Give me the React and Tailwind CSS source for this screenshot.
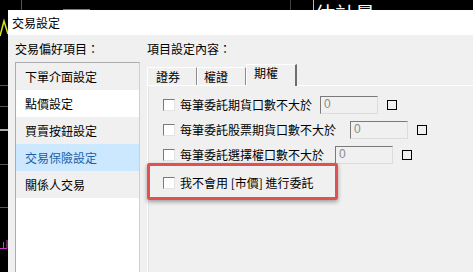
import React from "react";

const font = { fontFamily: '"Noto Sans CJK TC", "Noto Sans", sans-serif' };

const menuItems = [
  { label: "下單介面設定", bg: "bg-[#f0f0f0]" },
  { label: "點價設定", bg: "bg-white" },
  { label: "買賣按鈕設定", bg: "bg-[#f0f0f0]" },
  { label: "交易保險設定", bg: "bg-[#cce8ff]", active: true },
  { label: "關係人交易", bg: "bg-[#f0f0f0]" },
];

const limitRows = [
  { label: "每筆委託期貨口數不大於", width: "w-[140px]" },
  { label: "每筆委託股票期貨口數不大於", width: "w-[170px]" },
  { label: "每筆委託選擇權口數不大於", width: "w-[155px]" },
];

const Checkbox = () => (
  <span className="w-[12px] h-[12px] shrink-0 bg-white border border-t-[#7a7a7a] border-l-[#7a7a7a] border-r-[#e3e3e3] border-b-[#e3e3e3]" />
);

const TopStrip = () => (
  <svg width="473" height="10" className="block shrink-0">
    <rect width="473" height="10" fill="#000" />
    <line x1="21.5" y1="0" x2="21.5" y2="10" stroke="#555" />
    <line x1="63" y1="9.5" x2="90" y2="9.5" stroke="#8a8a20" />
    <line x1="290.5" y1="0" x2="290.5" y2="10" stroke="#444" />
    <line x1="313.5" y1="0" x2="313.5" y2="10" stroke="#bbb" />
    <text x="315" y="22" fill="#fff" fontSize="20" style={font}>
      估計量
    </text>
  </svg>
);

const LeftStrip = () => (
  <svg width="8" height="262" className="block shrink-0">
    <rect width="8" height="262" fill="#000" />
    <polyline points="0,26 4,11 8,24" fill="none" stroke="#d8e020" strokeWidth="1.5" />
    <line x1="0" y1="75.5" x2="8" y2="75.5" stroke="#555" />
    <line x1="0" y1="96.5" x2="8" y2="96.5" stroke="#555" />
    <line x1="0" y1="120" x2="8" y2="120" stroke="#aaa" strokeWidth="2" />
    <line x1="0" y1="154.5" x2="8" y2="154.5" stroke="#555" />
    <line x1="0" y1="197.5" x2="8" y2="197.5" stroke="#555" />
    <polyline points="0,238.5 7,238.5 7,230" fill="none" stroke="#c040c0" />
    <line x1="3.5" y1="232" x2="3.5" y2="238" stroke="#c040c0" />
  </svg>
);

export default function App() {
  return (
    <div
      className="w-[473px] h-[272px] bg-black overflow-hidden flex flex-col text-[12px] text-black"
      style={font}
    >
      <TopStrip />
      <div className="flex flex-1 min-h-0">
        <LeftStrip />

        {/* dialog */}
        <div className="flex-1 flex flex-col min-w-0">
          <div className="h-[25px] shrink-0 bg-white flex items-center pl-[4px] text-[12px]">
            交易設定
          </div>

          <div className="flex-1 bg-[#f0f0f0] flex pl-[7px] pt-[7px] gap-[7px]">
            {/* left column */}
            <div className="w-[125px] shrink-0 flex flex-col">
              <div className="h-[14px] leading-[14px]">交易偏好項目：</div>
              <div className="mt-[6px] flex-1 bg-white border border-[#acacac] border-r-[#d0d0d0] border-b-0 flex flex-col">
                {menuItems.map((item) => (
                  <div
                    key={item.label}
                    className={`h-[27px] flex items-center pl-[9px] ${item.bg} ${
                      item.active ? "text-[#1c5fa8]" : "text-black"
                    }`}
                  >
                    {item.label}
                  </div>
                ))}
              </div>
            </div>

            {/* right column */}
            <div className="flex-1 flex flex-col min-w-0">
              <div className="h-[14px] leading-[14px]">項目設定內容：</div>

              <div className="mt-[8px] h-[21px] flex items-end">
                <div className="w-[50px] h-[18px] leading-[17px] pl-[8px] border-t border-l border-white border-r border-r-[#8c8c8c]">
                  證券
                </div>
                <div className="w-[49px] h-[18px] leading-[17px] pl-[6px] border-t border-l border-white border-r border-r-[#8c8c8c]">
                  權證
                </div>
                <div className="w-[51px] h-[22px] mb-[-1px] relative z-10 bg-[#f0f0f0] pl-[7px] pt-[1px] leading-[14px] border-t border-l border-white border-r-2 border-r-[#6e6e6e]">
                  期權
                </div>
              </div>

              <div className="flex-1 relative border-t border-l border-white shadow-[inset_1px_0_0_#e2e2e2] pl-[15px] pt-[6px]">
                {limitRows.map((row) => (
                  <div key={row.label} className="h-[25px] flex items-center">
                    <Checkbox />
                    <span className={`ml-[5px] ${row.width} shrink-0 whitespace-nowrap`}>
                      {row.label}
                    </span>
                    <span
                      className="w-[58px] h-[18px] shrink-0 bg-[#f0f0f0] border border-t-[#7a7a7a] border-l-[#7a7a7a] border-r-[#dcdcdc] border-b-[#dcdcdc] pl-[3px] leading-[15px] text-[12px] text-[#8a8a8a]"
                      style={{ fontFamily: '"Liberation Sans", sans-serif' }}
                    >
                      0
                    </span>
                    <span className="ml-[9px] w-[10px] h-[10px] shrink-0 border border-black" />
                  </div>
                ))}

                <div className="mt-[3px] h-[25px] flex items-center">
                  <Checkbox />
                  <span className="ml-[5px] whitespace-nowrap">我不會用 [市價] 進行委託</span>
                </div>

                {/* highlight annotation */}
                <div className="absolute left-[-1px] top-[77px] w-[191px] h-[37px] border-[3px] border-[#e0514f] rounded-[2px] shadow-[0_2px_4px_rgba(0,0,0,0.35)] pointer-events-none" />
              </div>
            </div>
          </div>
        </div>
      </div>
    </div>
  );
}
